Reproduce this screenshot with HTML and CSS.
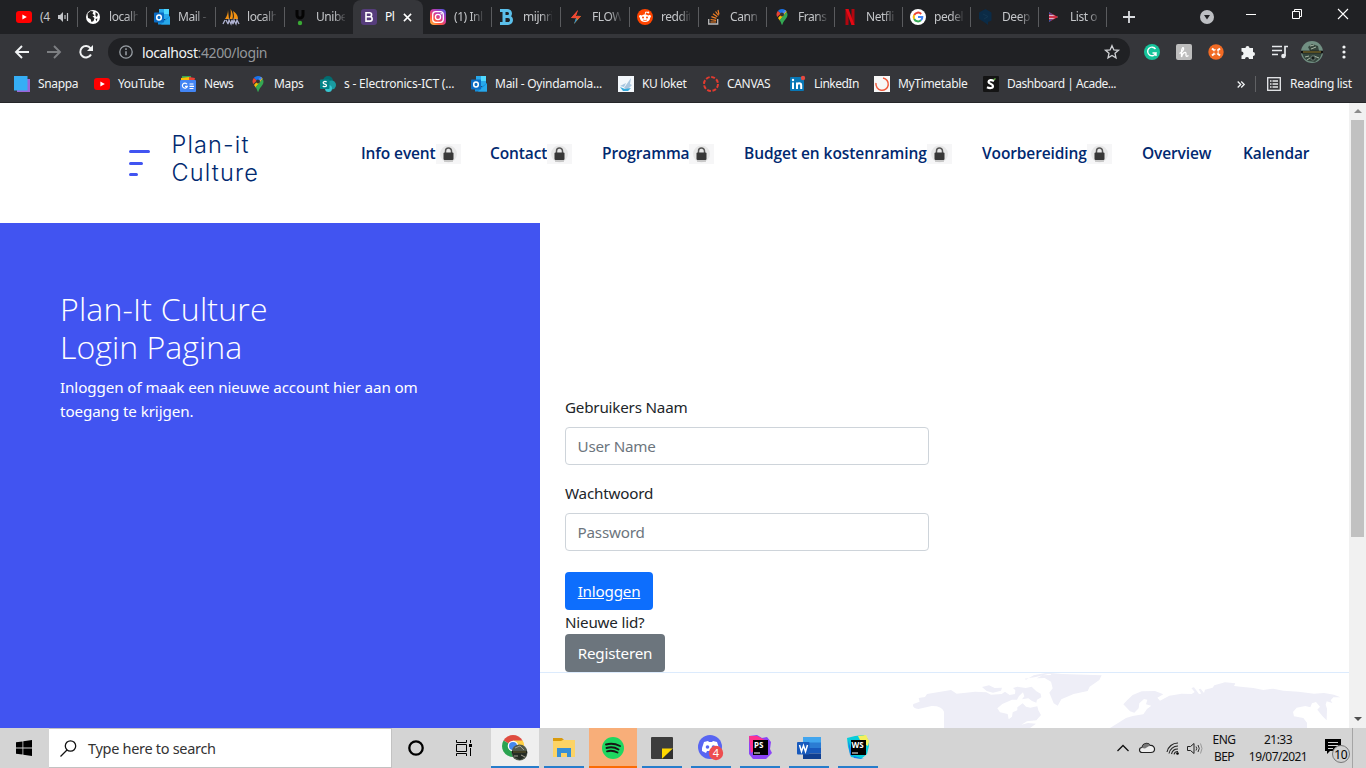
FILE: index.html
```html
<!DOCTYPE html>
<html lang="nl">
<head>
<meta charset="utf-8">
<title>Plan-it Culture</title>
<link rel="stylesheet" href="styles.css">
</head>
<body>
<svg width="0" height="0" class="defs">
<defs>
<symbol id="yt" viewBox="0 0 16 16"><rect y="2" width="16" height="12" rx="3" fill="#f00"/><path d="M6.4 5.4v5.2L10.8 8z" fill="#fff"/></symbol>
<symbol id="outlook" viewBox="0 0 16 16"><path d="M5 0h10v10H5z" fill="#28a8ea"/><path d="M10 0h5v5h-5z" fill="#50d9ff"/><path d="M5 5h5v5H5z" fill="#0364b8"/><path d="M4 8l6 3 6-4v8.500H4z" fill="#1490df"/><path d="M7 15.500l9-8v8z" fill="#28a8ea"/><rect y="3.500" width="10" height="10" rx=".8" fill="#0a6cc4"/><ellipse cx="5" cy="8.500" rx="2.300" ry="2.500" fill="none" stroke="#fff" stroke-width="1.500"/></symbol>
<symbol id="pin" viewBox="0 0 16 16"><path d="M8 0a5.500 5.500 0 0 0-4.200 2L8 5.500 11.500 1.300A5.500 5.500 0 0 0 8 0z" fill="#1a73e8"/><path d="M3.800 2a5.500 5.500 0 0 0-.6 6L7 4.500z" fill="#ea4335"/><path d="M3 7.500c.8 1.600 1.800 2.700 2.800 4L12.800 3A5 5 0 0 0 11 1L4 9z" fill="#fbbc04"/><path d="M12.600 3L5.600 11c1 1.500 1.500 3 2 4.400.2.600.7.600.9 0C9.500 11.500 13.500 9.500 13.500 5.500c0-1-.3-1.700-.9-2.500z" fill="#34a853"/><path d="M11.500 1.300L8 5.500" stroke="#4285f4" stroke-width="2"/><circle cx="8" cy="5.500" r="2" fill="#333"/></symbol>
<symbol id="lock" viewBox="0 0 25 20"><rect width="25" height="20" fill="#f6f6f7"/><circle cx="12.500" cy="10" r="8.500" fill="#e7e7e7"/><path d="M9.500 9V7a3 3 0 0 1 6 0v2" fill="none" stroke="#555" stroke-width="1.500"/><rect x="7.500" y="8.500" width="10" height="7.500" rx="1" fill="#383838"/><path d="M8 17h9" stroke="#aaa"/></symbol>
</defs>
</svg>

<header class="browser">
  <div class="tabstrip">
    <div class="tab wide"><svg class="ico"><use href="#yt"/></svg><span class="lbl short">(4</span><svg class="audio" viewBox="0 0 11 10"><path d="M0 3h2l3-3v10L2 7H0z" fill="#c4c6c9"/><path d="M7 3v4M9.500 1v8" stroke="#c4c6c9" stroke-width="1.200"/></svg></div>
    <div class="tab"><svg class="ico" viewBox="0 0 16 16"><circle cx="8" cy="8" r="7" fill="#fff"/><path d="M2.500 4.500l3-2.500 3 .5-1 2 2 2-2 1 2 1.500-1 3-2 1-1-3-2.500-1zM10.500 3l2.500 2-1 3-1.500-1zM10.500 10l2-.5-1 3z" fill="#222"/></svg><span class="lbl">localh</span></div>
    <div class="tab"><svg class="ico"><use href="#outlook"/></svg><span class="lbl">Mail -</span></div>
    <div class="tab"><svg class="ico" viewBox="0 0 16 16"><path d="M2 10c2-3 3-6 3-9l1 9zM6.500 10c1.500-3 1.500-7 1-10 2 3 3 6 2 10zM10.500 10c1-3 0-6-.5-8 4 3 5 5 5 8z" fill="#f29111"/><path d="M2 11L0 15M3 11l2 4M5 15l1-4 2 4 1-4 1 4 1-4 2 4 1-4 2 4" fill="none" stroke="#aeb1d0" stroke-width="1.300"/></svg><span class="lbl">localh</span></div>
    <div class="tab last"><svg class="ico" viewBox="0 0 16 16"><path d="M5 1v5a3 3 0 0 0 6 0V1" fill="none" stroke="#050505" stroke-width="3"/><circle cx="8" cy="14" r="2.200" fill="#3aaa35"/></svg><span class="lbl">Unibe</span></div>
    <div class="tab active"><svg class="ico" viewBox="0 0 16 16"><rect width="16" height="16" rx="3" fill="#563d7c"/><path d="M5 3.800h3.600a1.900 1.900 0 0 1 0 4H5zm0 4h4a2.100 2.100 0 0 1 0 4.300H5z" fill="none" stroke="#fff" stroke-width="1.600"/></svg><span class="lbl short">Pl</span><svg class="close" viewBox="0 0 10 10"><path d="M1 1l8 8M9 1l-8 8" stroke="#fff" stroke-width="1.700"/></svg></div>
    <div class="tab"><svg class="ico" viewBox="0 0 16 16"><defs><linearGradient id="ig" x1="0" y1="1" x2=".8" y2="0"><stop offset="0" stop-color="#ffc83f"/><stop offset=".35" stop-color="#ff543e"/><stop offset=".65" stop-color="#c837ab"/><stop offset="1" stop-color="#5b51d8"/></linearGradient></defs><rect width="16" height="16" rx="4" fill="url(#ig)"/><rect x="2.700" y="2.700" width="10.600" height="10.600" rx="3" fill="none" stroke="#fff" stroke-width="1.300"/><circle cx="8" cy="8" r="2.600" fill="none" stroke="#fff" stroke-width="1.300"/><circle cx="11.200" cy="4.800" r=".8" fill="#fff"/></svg><span class="lbl">(1) Inl</span></div>
    <div class="tab"><svg class="ico" viewBox="0 0 16 16"><path d="M1 1.500h7.500a3 3 0 0 1 0 6H5M1 14.500h8a3.500 3.500 0 0 0 0-7M5 1.500v13" fill="none" stroke="#5bc0eb" stroke-width="3"/></svg><span class="lbl">mijnri</span></div>
    <div class="tab"><svg class="ico" viewBox="0 0 16 16"><path d="M10 1L3 9l4 .2z" fill="#fb3b3b"/><path d="M6 15l7-8-4-.2z" fill="#f29a1f"/><path d="M10 1L8 7h5l-3 3-3-1H3z" fill="#ef4a32"/><path d="M8 9l-2 6 3-4z" fill="#168de2"/></svg><span class="lbl">FLOW</span></div>
    <div class="tab"><svg class="ico" viewBox="0 0 16 16"><circle cx="8" cy="8" r="8" fill="#ff4500"/><circle cx="3.500" cy="7.500" r="1.400" fill="#fff"/><circle cx="12.500" cy="7.500" r="1.400" fill="#fff"/><ellipse cx="8" cy="9.300" rx="5" ry="3.700" fill="#fff"/><path d="M8 6l.7-3 2.500.5" fill="none" stroke="#fff"/><circle cx="11.300" cy="3.500" r="1" fill="#fff"/><circle cx="6" cy="8.500" r="1" fill="#ff4500"/><circle cx="10" cy="8.500" r="1" fill="#ff4500"/><path d="M6 11q2 1.200 4 0" fill="none" stroke="#ff4500" stroke-width=".7"/></svg><span class="lbl">reddit</span></div>
    <div class="tab narrow"><svg class="ico" viewBox="0 0 16 16"><path d="M2.700 10v5h9v-5" fill="none" stroke="#bcbbbb" stroke-width="1.300"/><path d="M4.500 13h5.500M4.600 10.500l5.500.8M5.400 7.600l5 1.800M7 4.800l4.300 3M9.500 2.500l3 4M12 1l1 4.500" stroke="#f48024" stroke-width="1.200"/></svg><span class="lbl">Cann</span></div>
    <div class="tab narrow"><svg class="ico"><use href="#pin"/></svg><span class="lbl">Frans</span></div>
    <div class="tab narrow"><svg class="ico" viewBox="0 0 16 16"><path d="M3.500 0h3v16h-3zM9.500 0h3v16h-3z" fill="#b1060f"/><path d="M3.500 0h3l6 16h-3z" fill="#e50914"/></svg><span class="lbl">Netfli</span></div>
    <div class="tab narrow"><svg class="ico" viewBox="0 0 16 16"><circle cx="8" cy="8" r="8" fill="#fff"/><g fill="none" stroke-width="2"><path d="M4.200 6a4.300 4.300 0 0 1 7-1" stroke="#ea4335"/><path d="M4.200 10a4.300 4.300 0 0 1 0-4" stroke="#fbbc05"/><path d="M4.200 10a4.300 4.300 0 0 0 6.700 1.300" stroke="#34a853"/><path d="M8 8h4.300a4 4 0 0 1-1.400 3.300" stroke="#4285f4"/></g></svg><span class="lbl">pedel</span></div>
    <div class="tab narrow"><svg class="ico" viewBox="0 0 16 16"><path d="M7.500 0l6 3.500v8L10 13v3l-4-3-5-3V3.500z" fill="#0b2b46"/><path d="M5 5l5 2.500L6 10" fill="none" stroke="#133651"/></svg><span class="lbl">Deep</span></div>
    <div class="tab narrow"><svg class="ico" viewBox="0 0 16 16"><path d="M3 3l9 5-9 5z" fill="#d8253c"/><path d="M3 3v2l5 1.500zM3 13v-2l5-1.500z" fill="#3555a5"/><path d="M3 6.200h4l5 1.800-5 1.800H3" fill="#dde2f5"/><path d="M3 8h8" stroke="#cf142b" stroke-width="1.700"/></svg><span class="lbl">List o</span></div>
    <svg class="plus" viewBox="0 0 12 12"><path d="M6 0v12M0 6h12" stroke="#dadce0" stroke-width="1.800"/></svg>
    <div class="window">
      <svg width="14" height="14" viewBox="0 0 14 14"><circle cx="7" cy="7" r="7" fill="#bdbfc3"/><path d="M4 5h6l-3 4.500z" fill="#202124"/></svg>
      <svg width="10" height="10" viewBox="0 0 10 10"><path d="M0 5.500h10" stroke="#fff"/></svg>
      <svg width="10" height="10" viewBox="0 0 10 10"><path d="M.5 2.500h7v7h-7zM2.500 2.500v-2h7v7h-2" fill="none" stroke="#fff"/></svg>
      <svg width="10" height="10" viewBox="0 0 10 10"><path d="M0 0l10 10M10 0L0 10" stroke="#fff" stroke-width="1.100"/></svg>
    </div>
  </div>
  <div class="toolbar">
    <svg class="back" viewBox="0 0 14 14"><path d="M14 7H1M7 1L1 7l6 6" fill="none" stroke="#f1f3f4" stroke-width="1.900"/></svg>
    <svg class="fwd" viewBox="0 0 14 14"><path d="M0 7h13M7 1l6 6-6 6" fill="none" stroke="#7d7f82" stroke-width="1.900"/></svg>
    <svg class="reload" viewBox="0 0 14 14"><path d="M12 9.500A5.700 5.700 0 1 1 11.500 3.300" fill="none" stroke="#f1f3f4" stroke-width="2"/><path d="M14 0v6H8z" fill="#f1f3f4"/></svg>
    <div class="omnibox">
      <svg width="14" height="14" viewBox="0 0 14 14"><circle cx="7" cy="7" r="6.200" fill="none" stroke="#9aa0a6" stroke-width="1.300"/><path d="M7 6.200v4M7 3.300v1.600" stroke="#9aa0a6" stroke-width="1.500"/></svg>
      <span class="url">localhost<i>:4200/login</i></span>
      <svg class="star" width="16" height="16" viewBox="0 0 16 16"><path d="M8 1.700l1.900 4.200 4.600.4L11 9.300l1 4.500-4-2.400-4 2.400 1-4.500-3.500-3 4.600-.4z" fill="none" stroke="#d0d2d5" stroke-width="1.300"/></svg>
    </div>
    <div class="ext">
      <svg viewBox="0 0 16 16"><circle cx="8" cy="8" r="8" fill="#15c39a"/><path d="M11.500 5A4.300 4.300 0 1 0 12 9H8.500M12 8.500V12" fill="none" stroke="#fff" stroke-width="1.400"/></svg>
      <svg viewBox="0 0 16 16"><rect width="16" height="16" rx="2" fill="#bdbdbd"/><path d="M3.500 9.500C6 8 8 5.500 7.500 4S5.500 5 5.500 7.500V13c1-4.500 4.500-6 4.500-3.500 0 2-.5 4 2.500 2" fill="none" stroke="#fff" stroke-width="1.300"/></svg>
      <svg viewBox="0 0 16 16"><circle cx="8" cy="8" r="7.700" fill="#f26b24"/><path d="M4 4.500l2.500 2M12 4.500l-2.500 2M4 11.500l2.500-2M12 11.500l-2.500-2" stroke="#fff" stroke-width="2"/><circle cx="8" cy="8" r="2.300" fill="none" stroke="#fbd9c6" stroke-width="1.200" stroke-dasharray="2.400 1.200"/></svg>
      <svg viewBox="0 0 16 16"><path d="M1.500 4h4a2 2 0 1 1 4 0H13v4a2 2 0 1 1 0 4v3H9a2 2 0 0 0-4 0H1.500v-3.500a2 2 0 0 0 0-4z" fill="#f1f3f4"/></svg>
      <svg viewBox="0 0 16 16"><path d="M0 2.500h10M0 6.500h10M0 10.500h6M13 12V2.500h3" fill="none" stroke="#e8eaed" stroke-width="1.700"/><circle cx="11.500" cy="12" r="2.300" fill="#e8eaed"/></svg>
      <svg class="avatar" viewBox="0 0 22 22"><circle cx="11" cy="11" r="11" fill="#718f82"/><path d="M1 12h20l-2 5-5 4-7-1-4-3z" fill="#35463d"/><path d="M7 6l4-3 6 2 1 5H9z" fill="#35453c"/><path d="M9 5l4-1M10 8l5-2M4 16l4-1m5 0l5 2M6 19l3-2" stroke="#a9b8a6"/><path d="M0 11h22" stroke="#111" stroke-width="2.600"/><path d="M2 11h18" stroke="#b09b3a" stroke-width=".9"/><circle cx="12" cy="17" r="2.200" fill="#131b18" stroke="#71827a"/></svg>
      <svg viewBox="0 0 16 16"><g fill="#f1f3f4"><circle cx="8" cy="3" r="1.600"/><circle cx="8" cy="8" r="1.600"/><circle cx="8" cy="13" r="1.600"/></g></svg>
    </div>
  </div>
  <nav class="bookmarks">
    <a><svg class="ico" viewBox="0 0 16 16"><path d="M3 3h13v13H3z" fill="#9b66d8"/><path d="M0 0h13.500v14.500H0z" fill="#35aef5"/></svg><span>Snappa</span></a>
    <a><svg class="ico"><use href="#yt"/></svg><span>YouTube</span></a>
    <a><svg class="ico" viewBox="0 0 16 16"><path d="M2 0h9v4H2z" fill="#34a853"/><path d="M9 1l6 1-1 4H8z" fill="#ea4335"/><path d="M1 2l8-1v5H1z" fill="#fbbc04"/><rect y="4" width="16" height="12" rx="1" fill="#4285f4"/><path d="M7 8.300a2.500 2.500 0 1 0 .3 2H5M9.500 8h4M9.500 10.300h4.500M9.500 12.500h4" fill="none" stroke="#fff" stroke-width="1.200"/></svg><span>News</span></a>
    <a><svg class="ico"><use href="#pin"/></svg><span>Maps</span></a>
    <a><svg class="ico" viewBox="0 0 16 16"><circle cx="8" cy="5" r="5" fill="#036c70"/><circle cx="11.500" cy="9" r="4.500" fill="#1a9ba1"/><circle cx="8.500" cy="12.500" r="3.500" fill="#37c6d0"/><rect y="3.500" width="9.500" height="9.500" rx=".8" fill="#038387"/><path d="M6.700 6C5 5 3 5.500 3.200 7s3.300 1 3.300 2.500S4 11 2.800 10" fill="none" stroke="#fff" stroke-width="1.300"/></svg><span class="loose">s - Electronics-ICT (...</span></a>
    <a><svg class="ico"><use href="#outlook"/></svg><span class="mail">Mail - Oyindamola...</span></a>
    <a><svg class="ico" viewBox="0 0 16 16"><path d="M0 0h16v16H0z" fill="#f3f7fb"/><path d="M6 12l7-10-1 6 2 1-5 5zM2 10l6-3-2 4z" fill="#a9c6df"/><path d="M2 11l5 2 6-1-3 3H5z" fill="#36aadb"/></svg><span>KU loket</span></a>
    <a><svg class="ico" viewBox="0 0 16 16"><circle cx="8" cy="8" r="7" fill="none" stroke="#e23b30" stroke-width="2" stroke-dasharray="3.900 1.600"/></svg><span>CANVAS</span></a>
    <a><svg class="ico" viewBox="0 0 16 16"><rect y="1" width="14" height="14" rx="1" fill="#0877b5"/><path d="M3 6.500V13M7 13V6.500M7 9.500c0-3 4.200-3 4.200 0V13" fill="none" stroke="#fff" stroke-width="2"/><circle cx="3" cy="4" r="1.200" fill="#fff"/><circle cx="13" cy="2" r="2.200" fill="#e34b42"/></svg><span class="tight">LinkedIn</span></a>
    <a><svg class="ico" viewBox="0 0 16 16"><path d="M0 0h16v16H0z" fill="#f7f7f7"/><path d="M9 2A6.200 6.200 0 1 1 2 7" fill="none" stroke="#ef5a3c" stroke-width="1.500"/></svg><span>MyTimetable</span></a>
    <a><svg class="ico" viewBox="0 0 16 16"><rect width="16" height="16" rx="1" fill="#141414"/><path d="M11 5C8.500 3.500 5.500 4 5.500 6s4.500 1.500 4.500 4-3.500 2.500-6 1.200" fill="none" stroke="#fff" stroke-width="2.200"/><path d="M10.500 4l2-1.500" stroke="#67b346" stroke-width="1.500"/></svg><span class="tight">Dashboard | Acade...</span></a>
    <a class="more"><svg width="8" height="7" viewBox="0 0 8 7"><path d="M.7.5l3 3-3 3M4.200.5l3 3-3 3" fill="none" stroke="#f1f3f4" stroke-width="1.300"/></svg></a>
    <a class="reading"><svg width="14" height="14" viewBox="0 0 14 14"><rect x=".7" y=".7" width="12.600" height="12.600" fill="none" stroke="#e8eaed" stroke-width="1.300"/><path d="M5.500 4H11M5.500 7H11M5.500 10H11M3 4h1.500M3 7h1.500M3 10h1.500" stroke="#e8eaed" stroke-width="1.500"/></svg><span>Reading list</span></a>
  </nav>
</header>

<div class="viewport">
  <div class="page">
    <header class="site">
      <svg class="bars" viewBox="0 0 22 27"><path d="M1.500 1.500h18M1.500 13.500h11M1.500 24.500h6" stroke="#4154f1" stroke-width="3" stroke-linecap="round"/></svg>
      <div class="brand">Plan-it Culture</div>
      <nav class="menu">
        <a><span>Info event</span><svg><use href="#lock"/></svg></a>
        <a><span>Contact</span><svg><use href="#lock"/></svg></a>
        <a><span>Programma</span><svg><use href="#lock"/></svg></a>
        <a><span class="long">Budget en kostenraming</span><svg><use href="#lock"/></svg></a>
        <a><span>Voorbereiding</span><svg><use href="#lock"/></svg></a>
        <a><span>Overview</span></a>
        <a><span>Kalendar</span></a>
      </nav>
    </header>
    <main class="login">
      <section class="intro">
        <h1><span>Plan-It Culture</span><span class="second">Login Pagina</span></h1>
        <p>Inloggen of maak een nieuwe account hier aan om<br>toegang te krijgen.</p>
      </section>
      <section class="right">
        <form class="form">
          <label>Gebruikers Naam</label>
          <input type="text" placeholder="User Name">
          <label>Wachtwoord</label>
          <input type="password" placeholder="Password">
          <button type="button" class="primary">Inloggen</button>
          <span class="new">Nieuwe lid?</span>
          <button type="button" class="secondary">Registeren</button>
        </form>
        <footer class="map">
          <svg viewBox="0 39 1407 165" fill="#eeeef7"><path d="M192 204V155Q185 137 155 138L115 147Q95 145 100 132L119 125 116 114 135 111 141 102 213 90 230 101 285 95 319 97 333 104 365 102 375 95 389 105 405 102 406 91 399 84 412 80 437 84 455 80 469 94 482 101 484 112 471 119 469 128 456 123 445 115 426 118 433 109 429 97 417 108 411 119 396 119 367 132 352 145 360 157 383 162 386 178 396 170 398 157 412 151 412 142 428 130 438 140 451 143 472 139 475 151 483 165 469 181 441 184 424 194 444 189 468 191 450 204z"/><path d="M306 81l21-5 17 8 22-1-3 9-24 6-19-5zM438 59l23-13 41-8 45 4 118 4-7 14-29 20-6 13-42 9-37 16-11 19-12-7-13-32 10-13-5-20-19-11-24 1 18-9 24-1 4-6-49 12-33 5z"/><path d="M730 133L742 120 758 105 785 94 825 93 850 103 832 113 840 122 868 107 905 101 935 102 944 96 934 84 942 82 957 102 964 101 956 88 962 86 972 99 975 89 998 83 1003 76 1035 67 1066 70 1062 78 1082 80 1120 84 1150 90 1180 86 1210 92 1256 95 1302 101 1332 99 1362 104 1381 112 1360 112 1352 121 1357 129 1340 124 1337 134 1341 146 1340 181 1327 168 1312 149 1320 140 1308 126 1296 130 1291 142 1276 138 1250 143 1239 156 1242 169 1270 174 1281 188V204H690L713 190 738 174 758 168 790 163 801 147 814 137 798 133 802 119 792 117 778 130 776 145 763 158 750 154z"/></svg>
        </footer>
      </section>
    </main>
  </div>
  <div class="scroll"><b class="up"></b><div class="thumb"></div><b class="down"></b></div>
</div>

<footer class="taskbar">
  <div class="start"><svg width="16" height="16" viewBox="0 0 16 16"><path d="M0 2.300L6.500 1.400v6.200H0zM7.300 1.200L16 0v7.600H7.300zM0 8.400h6.500v6.200L0 13.700zM7.300 8.400H16V16l-8.700-1.200z" fill="#000"/></svg></div>
  <div class="search"><svg width="17" height="17" viewBox="0 0 17 17"><circle cx="10.500" cy="6" r="5.200" fill="none" stroke="#111" stroke-width="1.300"/><path d="M7 10L.5 16.500" stroke="#111" stroke-width="1.300"/></svg><span>Type here to search</span></div>
  <div class="cell"><svg width="16" height="16" viewBox="0 0 16 16"><circle cx="8" cy="8" r="6.700" fill="none" stroke="#000" stroke-width="2.300"/></svg></div>
  <div class="cell"><svg width="16" height="16" viewBox="0 0 16 16"><path d="M.5 0v2.500h10V0M.5 16v-2.500h10V16M.5 4.500h10v7H.5zM14.500 0v3M14.500 8v8" fill="none" stroke="#000"/><path d="M13 4h3v3h-3z"/></svg></div>
  <div class="apps">
    <div class="app chrome"><svg width="26" height="26" viewBox="0 0 26 26"><path d="M11 11L1.500 5.500A11 11 0 0 1 20.500 5.500z" fill="#df4b3f"/><path d="M11 11V5.500h9.700A11 11 0 0 1 11 22l5-9z" fill="#ffd044"/><path d="M11 11l-9.500-5.500A11 11 0 0 0 11 22l5-8z" fill="#2aa350"/><circle cx="11" cy="11" r="5.300" fill="#fff"/><circle cx="11" cy="11" r="4" fill="#4688ef"/><circle cx="17.500" cy="17.500" r="8" fill="#51594c"/><path d="M10 18h15l-2 4-5 3-6-3z" fill="#242b24"/><path d="M13 13l5-2 4 4M12 21h4m3-1l4 2" fill="none" stroke="#a2a092"/><path d="M10 17h15" stroke="#1b201b" stroke-width="2"/><path d="M11 17h13" stroke="#8c7f37" stroke-width=".7"/></svg></div>
    <div class="app"><svg width="22" height="20" viewBox="0 0 22 20"><path d="M0 0h9l2 2h10v5H0z" fill="#d99a0b"/><path d="M0 3h8l2-1h12v17H0z" fill="#fcd365"/><path d="M4 19v-9h14v9h-4v-4H8v4z" fill="#368fd6"/></svg></div>
    <div class="app spotify"><svg width="22" height="22" viewBox="0 0 22 22"><circle cx="11" cy="11" r="11" fill="#1ed760"/><path d="M4 7.500q7-2 14 1.500M4.500 11q6.500-2 12 1.500M5 14.300q5.500-1.500 10.500 1.200" fill="none" stroke="#161616" stroke-width="1.900" stroke-linecap="round"/></svg></div>
    <div class="app sticky"><svg width="22" height="22" viewBox="0 0 22 22"><rect width="22" height="22" rx="1" fill="#3c3c3c"/><path d="M11 11.500H22L11 22z" fill="#ffd800"/><path d="M22 11.500V22H11z" fill="#303030"/></svg></div>
    <div class="app"><svg width="26" height="26" viewBox="0 0 26 26"><circle cx="12" cy="12" r="12" fill="#5865f2"/><path d="M6 7l4-1 1 1h3l1-1 4 1 2 6v3l-4 2-1-2H9l-1 2-4-2v-3z" fill="#fff"/><circle cx="9.500" cy="12" r="1.800" fill="#5865f2"/><circle cx="15.500" cy="12" r="1.800" fill="#5865f2"/><circle cx="18" cy="18" r="7.200" fill="#ed4d4f"/><text x="18" y="22" text-anchor="middle" class="four">4</text></svg></div>
    <div class="app"><svg width="24" height="24" viewBox="0 0 24 24"><path d="M1 0l8-1 5 3 5-1 4 5-1 7 2 4-6 6H5l-4-5z" fill="#8b45f6"/><path d="M1 0l8 0 10 5-16 12z" fill="#ff318c"/><path d="M5 4h15v15H5z" fill="#000"/><text x="6" y="12" class="jb">PS</text><path d="M6 17h6" stroke="#fff"/></svg></div>
    <div class="app"><svg width="24" height="22" viewBox="0 0 24 22"><path d="M6 0h18v6H6z" fill="#41a5ee"/><path d="M6 5.500h18V11H6z" fill="#2b7cd3"/><path d="M6 11h18v5.500H6z" fill="#185abd"/><path d="M6 16.500h18V22H6z" fill="#103f91"/><rect y="5" width="12.500" height="12.500" rx="1" fill="#185abd"/><path d="M2.500 8l2 6.500 2-6 2 6 2-6.500" fill="none" stroke="#fff" stroke-width="1.500"/></svg></div>
    <div class="app"><svg width="24" height="24" viewBox="0 0 24 24"><path d="M1 2l8-2 9-1 4 4 1 7-2 8-6 5-10-2-3-10z" fill="#08cdda"/><path d="M12 0l8-1 3 6-1 5-7-4z" fill="#f5f05b"/><path d="M2 4l6 18 10 1-14-4z" fill="#1878ef"/><path d="M5 4h15v15H5z" fill="#000"/><text x="5.500" y="12" class="jb">WS</text><path d="M6 17h6" stroke="#fff"/></svg></div>
  </div>
  <div class="tray">
    <svg width="12" height="8" viewBox="0 0 12 8"><path d="M.5 7L6 1.500 11.500 7" fill="none" stroke="#111" stroke-width="1.300"/></svg>
    <svg width="16" height="12" viewBox="0 0 16 12"><path d="M3 10.500a2.500 2.500 0 0 1 0-5C4 1 9 0 11 3.500c3-.5 5 2 4.500 4.500-.4 2-2 2.500-3.500 2.500z" fill="#eee" stroke="#222" stroke-width="1.200"/><path d="M3 6C4.500 1 9 0 11 3.500L6 6.500z" fill="#777"/></svg>
    <svg width="14" height="14" viewBox="0 0 14 14"><path d="M1 11A11 11 0 0 1 12 2M3 12.500A9 9 0 0 1 12 5M5.500 13A6.500 6.500 0 0 1 12 8M8 13.300A4 4 0 0 1 12 10.500" fill="none" stroke="#222" stroke-width="1.100"/><circle cx="11.500" cy="12.500" r="1.300"/></svg>
    <svg width="17" height="13" viewBox="0 0 17 13"><path d="M.5 4.500h3l3.500-3v10l-3.500-3h-3z" fill="none" stroke="#222"/><path d="M9 4.500q1.500 2 0 4M11 3q2.500 3.500 0 7" fill="none" stroke="#333"/><path d="M13.500 1.500q3 5 0 10" fill="none" stroke="#999"/></svg>
    <div class="lang"><span>ENG</span><span>BEP</span></div>
    <div class="clock"><span>21:33</span><span class="date">19/07/2021</span></div>
    <svg class="note" width="26" height="26" viewBox="0 0 26 26"><path d="M1 2h16v12H6l-3 3v-3H1z"/><path d="M4 5.500h10M4 8.500h10M4 11.500h5" stroke="#d4d4d4"/><circle cx="17" cy="17" r="8.500" fill="#d0d0d0" stroke="#777"/><text x="16.700" y="21.500" text-anchor="middle" class="ten">10</text></svg>
    <i class="edge"></i>
  </div>
</footer>
</body>
</html>
```
FILE: styles.css
```css
* { box-sizing: border-box; }
body { margin: 0; width: 1366px; height: 768px; overflow: hidden; display: flex; flex-direction: column; background: #fff; font-family: "Noto Sans", "Open Sans", sans-serif; }
.defs { position: absolute; }
svg { flex: none; display: block; overflow: visible; }
.ico { width: 16px; height: 16px; }

.browser { height: 103px; background: #35363a; border-bottom: 1px solid #252629; font-size: 12px; letter-spacing: -.3px; color: #f1f3f4; }
.tabstrip { height: 34px; background: #202124; display: flex; padding-left: 8px; }
.tab { width: 69px; height: 34px; flex: none; display: flex; align-items: center; padding-left: 7px; gap: 8px; color: #c4c6c9; background: linear-gradient(#5a5b5e, #5a5b5e) right 7px / 1px 20px no-repeat; }
.tab.wide { width: 70px; padding-left: 8px; }
.tab.narrow { width: 68px; }
.tab.last { background: none; width: 68px; }
.tab.active { background: #35363a; border-radius: 8px 8px 0 0; color: #fff; width: 70px; padding-left: 8px; }
.tab .lbl { width: 29px; white-space: nowrap; letter-spacing: -.45px; margin-top: -1px; -webkit-mask-image: linear-gradient(90deg, #000 60%, rgba(0,0,0,.15)); }
.tab .lbl.short { width: 10px; -webkit-mask-image: none; }
.audio { width: 11px; height: 10px; }
.close { width: 9px; height: 9px; }
.plus { width: 12px; height: 12px; margin: 11px 0 0 16px; }
.window { flex: 1; height: 28px; display: flex; align-items: center; padding-left: 65px; }
.window svg + svg { margin-left: 36px; }
.window svg:first-child { margin-top: 6px; }
.window svg:nth-child(2) { margin-left: 32px; }
.toolbar { height: 34px; display: flex; align-items: center; padding: 2px 0 0 15px; }
.back, .fwd, .reload { width: 14px; height: 14px; }
.fwd, .reload { margin-left: 18px; }
.omnibox { width: 1022px; height: 28px; margin-left: 15px; border-radius: 14px; background: #202124; display: flex; align-items: center; padding: 0 10px 0 11px; }
.url { font-size: 14px; margin-left: 9px; letter-spacing: -.4px; }
.url i { font-style: normal; color: #94979b; }
.star { margin-left: auto; }
.ext { display: flex; align-items: center; gap: 16px; padding-left: 14px; }
.ext svg { width: 16px; height: 16px; }
.ext .avatar { width: 22px; height: 22px; margin: 0 -3px; }
.bookmarks { height: 34px; display: grid; grid-template-columns: 80px 86px 70px 70px 151px 147px 85px 87px 84px 109px 254px 18px 1fr; padding: 0 0 2px 14px; align-items: center; }
.bookmarks a { display: flex; align-items: center; gap: 8px; white-space: nowrap; }
.bookmarks span { margin-top: -1px; letter-spacing: -.33px; }
.bookmarks .tight { letter-spacing: -.5px; }
.bookmarks .loose { letter-spacing: -.2px; }
.bookmarks .mail { letter-spacing: -.25px; }
.bookmarks .reading { border-left: 1px solid #606164; padding-left: 11px; height: 16px; gap: 9px; }

.viewport { height: 625px; display: flex; }
.page { width: 1349px; display: flex; flex-direction: column; overflow: hidden; }
.site { height: 120px; display: flex; flex: none; color: #012970; }
.bars { width: 22px; height: 27px; margin: 47px 0 0 129px; }
.brand { width: 110px; margin: 28px 0 0 20.500px; font-family: Inter, sans-serif; font-weight: 300; font-size: 23.500px; line-height: 28px; letter-spacing: 1.150px; }
.menu { display: grid; grid-template-columns: 129px 112px 142px 238px 160px 101px 1fr; margin: 40px 0 0 79.500px; height: 20px; font-family: "Open Sans", sans-serif; font-size: 15.500px; font-weight: 600; letter-spacing: -.12px; }
.menu a { display: flex; align-items: center; white-space: nowrap; }
.menu span { margin-top: -2px; }
.menu .long { letter-spacing: -.06px; }
.menu svg { width: 25px; height: 20px; margin-top: 1px; }
.login { flex: 1; display: flex; }
.intro { width: 540px; background: #4154f1; color: #fff; padding: 67px 60px; }
.intro h1 { margin: 0 0 8px; display: flex; flex-direction: column; font-family: "Open Sans", sans-serif; font-weight: 300; font-size: 32px; line-height: 38.400px; letter-spacing: .2px; }
.intro .second { letter-spacing: .05px; }
.intro p { margin: 0; font-size: 15.200px; line-height: 24px; white-space: nowrap; letter-spacing: -.1px; }
.right { flex: 1; display: flex; flex-direction: column; }
.form { height: 450px; border-bottom: 1px solid #dcebfd; padding: 172px 0 0 25px; display: flex; flex-direction: column; align-items: flex-start; flex: none; color: #212529; font-size: 15.200px; letter-spacing: -.2px; }
.form label { line-height: 24px; margin-bottom: 8px; }
.form input { width: 364px; height: 38px; border: 1px solid #ced4da; border-radius: 4px; padding: 0 11.500px; font: inherit; letter-spacing: inherit; margin: 0 0 16px; background: #fff; }
.form input[type=password] { margin-bottom: 21px; }
.form input::placeholder { color: #6c757d; opacity: 1; }
.form button { height: 38px; flex: none; border: 0; border-radius: 4px; color: #fff; font: inherit; letter-spacing: inherit; padding: 0; }
.form .primary { width: 88px; background: #0d6efd; text-decoration: underline; }
.form .secondary { width: 100px; background: #6c757d; }
.new { line-height: 24px; }
.map { padding-left: 340px; height: 55px; overflow: hidden; }
.map svg { width: 469px; height: 55px; }
.scroll { width: 17px; background: #f1f1f1; display: flex; flex-direction: column; align-items: center; }
.thumb { width: 13px; height: 417px; margin-top: 7px; background: #c1c1c1; }
.up, .down { border: 4px solid transparent; height: 0; }
.up { border-top: 0; border-bottom-color: #8c8c8c; margin-top: 6px; }
.down { border-bottom: 0; border-top-color: #505050; margin: auto 0 7px; }

.taskbar { height: 40px; background: #d4d4d4; display: flex; color: #111; }
.start { width: 49px; display: flex; align-items: center; padding-left: 16px; }
.search { width: 343px; background: #fff; border: 1px solid #c2c2c2; border-left: 0; display: flex; align-items: center; padding-left: 11px; gap: 11px; font-size: 14.500px; letter-spacing: -.3px; color: #333; }
.cell { width: 48px; display: flex; align-items: center; justify-content: center; }
.apps { display: flex; margin-left: 2px; }
.app { width: 40px; margin: 0 5px 0 4px; height: 40px; display: flex; align-items: center; justify-content: center; border-bottom: 2px solid #277dcb; padding-top: 2px; }
.app.chrome, .app.spotify { width: 48px; margin: 0 1px 0 0; }
.app.chrome { background: #efefef; margin-left: 1px; margin-right: 1px; }
.app.spotify { background: #f8ae79; border-color: #fa6b05; }
.four { font: 11px "Noto Sans", sans-serif; fill: #fff; letter-spacing: 0; }
.jb { font: bold 8px "Noto Sans", sans-serif; fill: #fff; }
.tray { margin-left: auto; width: 249px; display: flex; align-items: center; font-size: 12px; line-height: 17px; }
.tray svg + svg { margin-left: 11px; }
.tray svg:nth-child(2) { margin-left: 10px; }
.tray svg:nth-child(4) { margin-left: 7px; }
.lang, .clock { display: flex; flex-direction: column; align-items: center; letter-spacing: -.55px; }
.lang { width: 24px; margin-left: 8px; }
.clock { width: 60px; margin-left: 12px; }
.note { margin-left: 16px; margin-top: 3px; }
.ten { font: 12px "Noto Sans", sans-serif; letter-spacing: -.5px; }
.edge { width: 1px; height: 40px; margin-left: 2px; background: #a5a5a5; }
```
